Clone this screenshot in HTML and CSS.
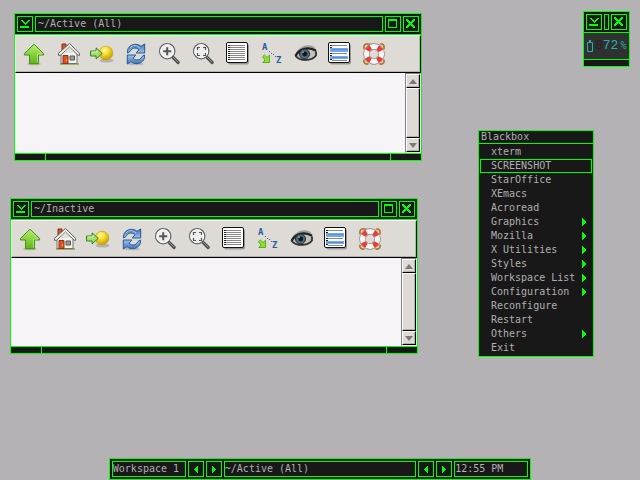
FILE: index.html
```html
<!DOCTYPE html>
<html lang="en">
<head>
<meta charset="utf-8">
<title>Blackbox</title>
<link rel="stylesheet" href="styles.css">
</head>
<body>
<svg class="defs" aria-hidden="true">
  <defs>
    <linearGradient id="g-green" x1="0" y1="0" x2="0" y2="1"><stop offset="0" stop-color="#b4ee68"/><stop offset="1" stop-color="#5fb61a"/></linearGradient>
    <linearGradient id="g-blue" x1="0" y1="0" x2="0" y2="1"><stop offset="0" stop-color="#3f74b4"/><stop offset="1" stop-color="#9cc2ea"/></linearGradient>
    <radialGradient id="g-ball" cx=".4" cy=".3" r=".7"><stop offset="0" stop-color="#fffab0"/><stop offset=".45" stop-color="#f6dc28"/><stop offset="1" stop-color="#c89a08"/></radialGradient>
    <symbol id="i-iconify" viewBox="0 0 14 14"><path d="M3 3h2v1h1v1h1v1h1V5h1V4h1V3h2v1h-1v1h-1v1H9v1H8v1H7V7H6V6H5V5H4V4H3zM2 9h9v2H2z" fill="#0f0"/></symbol>
    <symbol id="i-max" viewBox="0 0 14 14"><path d="M2 2h9v9H2zM3 4v6h7V4z" fill="#0f0" fill-rule="evenodd"/></symbol>
    <symbol id="i-close" viewBox="0 0 14 14"><path d="M2 2h2v1h1v1h1v1h1V4h1V3h1V2h2v2h-1v1H9v1H8v1h1v1h1v1h1v2H9v-1H8V9H7V8H6v1H5v1H4v1H2V9h1V8h1V7h1V6H4V5H3V4H2z" fill="#0f0"/></symbol>
    <symbol id="i-left" viewBox="0 0 14 14"><path d="M8 4h1v7H8v-1H7V9H6V8H5V7h1V6h1V5h1z" fill="#0f0"/></symbol>
    <symbol id="i-right" viewBox="0 0 14 14"><path d="M5 4h1v1h1v1h1v1h1v1H8v1H7v1H6v1H5z" fill="#0f0"/></symbol>
    <symbol id="i-sub" viewBox="0 0 4 8"><path d="M0 0h1v1h1v1h1v1h1v2H3v1H2v1H1v1H0z" fill="#0f0"/></symbol>

    <symbol id="t-up" viewBox="0 0 24 24"><ellipse cx="12" cy="22" rx="7" ry="1.3" fill="#8a8a80" opacity=".45"/><path d="M12 2.2 21.6 11.5V13H16.5V21.7H7.5V13H2.4V11.5z" fill="url(#g-green)" stroke="#459016"/><path d="M12 3.8 20 12H15.5V20.7" fill="none" stroke="#d0f59c" opacity=".6"/></symbol>
    <symbol id="t-home" viewBox="0 0 24 24"><path d="M4 22h19" stroke="#78a532" stroke-width="1.4"/><path d="M6 2h4v6L6 11z" fill="#d85428" stroke="#75351e"/><path d="M5 11v10.5h16V11L13.5 3z" fill="#f3f3f1" stroke="#72736f"/><path d="M13.5 1.5 2.5 11.3v2h2L13.5 5l8.7 8.3h1.3v-2z" fill="#ededeb" stroke="#5d605b"/><path d="M10 6v5M12 5v6M14 5v6M16 6v5" stroke="#cfcfcb"/><path d="M7 13.5h5v8H7z" fill="#d95224" stroke="#9e2d10"/><circle cx="10.6" cy="18" r=".6" fill="#fff"/><path d="M14 14h4.5v4H14z" fill="#9da09a" stroke="#555753"/></symbol>
    <symbol id="t-go" viewBox="0 0 24 24"><ellipse cx="16.5" cy="18.5" rx="7" ry="2" fill="#777" opacity=".4"/><circle cx="16" cy="11" r="6.8" fill="url(#g-ball)" stroke="#c0a010" stroke-width=".7"/><path d="M.5 9h5.6V5.9L12.2 11.4 6.1 17V14H.5z" fill="#a1dc6c" stroke="#38801b"/><path d="M1.5 10h5.6V8" fill="none" stroke="#dbf8bc"/></symbol>
    <symbol id="t-refresh" viewBox="0 0 24 24"><ellipse cx="12" cy="22" rx="8" ry="1.3" fill="#777" opacity=".35"/><path id="half" d="M3.5 8.3C5 2.2 12.5.6 17 4.3L20.7 2v9h-8.5L15 7.6C11.2 4.8 7.7 6 6 9.5L3.5 11z" fill="url(#g-blue)" stroke="#2b5a95"/><use href="#half" transform="rotate(180 12 12)"/><path d="M6 6c3-3.5 7-3.1 10 0" fill="none" stroke="#a9cbef"/></symbol>
    <symbol id="t-zoom" viewBox="0 0 24 24"><path d="M14.8 15.2 20.2 20.5" stroke="#4b4f50" stroke-width="3.2" stroke-linecap="round"/><path d="M14.8 14.8 20.2 20.2" stroke="#959996"/><circle cx="9.2" cy="9.2" r="7.6" fill="#edeeed" stroke="#626561" stroke-width="1.3"/><circle cx="9.2" cy="9.2" r="6.5" fill="none" stroke="#fff"/><path d="M5.2 9.2h8M9.2 5.2v8" stroke="#555" stroke-width="2"/></symbol>
    <symbol id="t-fit" viewBox="0 0 24 24"><path d="M14.8 15.2 20.2 20.5" stroke="#4b4f50" stroke-width="3.2" stroke-linecap="round"/><path d="M14.8 14.8 20.2 20.2" stroke="#959996"/><circle cx="9.2" cy="9.2" r="7.6" fill="#edeeed" stroke="#626561" stroke-width="1.3"/><circle cx="9.2" cy="9.2" r="6.5" fill="none" stroke="#fff"/><path d="M5.500 8V5.500H8M11 5.500h2.500V8M13.500 11v2.500H11M8 13.500H5.500V11" fill="none" stroke="#555" stroke-width="1.2"/></symbol>
    <symbol id="t-list" viewBox="0 0 24 24"><rect x="2" y="2" width="21" height="20.500" rx="2" fill="#555" opacity=".5"/><rect x=".5" y=".5" width="21" height="20" rx="1.500" fill="#fff" stroke="#111"/><path d="M2 3.500h2M2 5.500h2M2 7.500h2M2 9.500h2M2 11.500h2M2 13.500h2M2 15.500h2M2 17.500h2" stroke="#222"/><path d="M4 3.500h15M4 5.500h15M4 7.500h15M4 9.500h15M4 11.500h15M4 13.500h15M4 15.500h15M4 17.500h15" stroke="#888"/></symbol>
    <symbol id="t-mark" viewBox="0 0 24 24"><rect x="2" y="2" width="21" height="20.500" rx="2" fill="#555" opacity=".5"/><rect x=".5" y=".5" width="21" height="20" rx="1.500" fill="#fff" stroke="#111"/><path d="M2 3.500h2M2 5.500h2M2 7.500h2M2 9.500h2M2 11.500h2M2 13.500h2M2 15.500h2M2 17.500h2" stroke="#222"/><path d="M4 3.500h15M4 11.500h15M4 18.500h15" stroke="#888"/><path d="M2 6h18v4H2zM2 14h18v3H2z" fill="#72a8ee"/><path d="M4 7.500h15M4 15.500h15" stroke="#5b90d8"/></symbol>
    <symbol id="t-sort" viewBox="0 0 24 24"><text x="2" y="8" class="letter">A</text><text x="16" y="21" class="letter">Z</text><path d="M9 9h1v1H9zM11 11h1v1h-1zM13 12h1v1h-1zM15 14h1v1h-1z" fill="#3465a4"/><path d="M2.500 14.700 4.300 13 7 15.500 9.500 13.200V20.500H2.800L5 18z" fill="#8ae234" stroke="#4e9a06" stroke-width=".8"/></symbol>
    <symbol id="t-eye" viewBox="0 0 24 24"><path d="M2 11C6 3.500 15 1.500 20.500 5L23 10 21.500 15.500C16 20 9 20 5 17L1.500 14z" fill="#666" opacity=".5"/><path d="M3 13.500C7 7 14 5.500 21.500 9L21.500 13.500C18 17.500 9 18.500 5.500 15.800z" fill="#c4c1bd"/><path d="M1.500 14C5 7 14 3.800 22 8.800" fill="none" stroke="#222" stroke-width="2.200"/><path d="M1.500 14C6 19.500 18 19 22 13.500V9.500" fill="none" stroke="#333" stroke-width="1.800"/><circle cx="10.500" cy="12" r="5" fill="#4f6c7c" stroke="#202b30"/><circle cx="10.800" cy="12" r="2.400" fill="#10181b"/><circle cx="9" cy="10.200" r=".8" fill="#aebfc8"/></symbol>
    <symbol id="t-help" viewBox="0 0 24 24"><rect x="2" y="2" width="20" height="20" rx="3" fill="none" stroke="#b57a2c" stroke-width="1.400" stroke-dasharray="7 10.700" stroke-dashoffset="3.500" /><path d="M2 6.500Q1 1.500 6 1.800M18 1.800Q23 1.500 22 6.500M22 17.500Q23 22.500 18 22.200M6 22.200Q1 22.500 2 17.500" fill="none" stroke="#b57a2c" stroke-width="1.300"/><circle cx="12" cy="12" r="7.500" fill="none" stroke="#83837f" stroke-width="6.400"/><circle cx="12" cy="12" r="7.500" fill="none" stroke="#f5f5f3" stroke-width="5.200"/><circle cx="12" cy="12" r="7.500" fill="none" stroke="#ee3a34" stroke-width="5.200" stroke-dasharray="4.600 7.181" stroke-dashoffset="-3.590"/></symbol>
  </defs>
</svg>

<main class="desktop">
  <section class="window active" aria-label="~/Active (All)">
    <header class="bar">
      <button class="box" aria-label="Iconify"><svg><use href="#i-iconify"/></svg></button>
      <h2 class="box label">~/Active (All)</h2>
      <button class="box" aria-label="Maximize"><svg><use href="#i-max"/></svg></button>
      <button class="box" aria-label="Close"><svg><use href="#i-close"/></svg></button>
    </header>
    <nav class="tools">
      <button aria-label="Up"><svg><use href="#t-up"/></svg></button>
      <button aria-label="Home"><svg><use href="#t-home"/></svg></button>
      <button aria-label="Go to"><svg><use href="#t-go"/></svg></button>
      <button aria-label="Refresh"><svg><use href="#t-refresh"/></svg></button>
      <button aria-label="Zoom in"><svg><use href="#t-zoom"/></svg></button>
      <button aria-label="Zoom to fit"><svg><use href="#t-fit"/></svg></button>
      <button aria-label="List"><svg><use href="#t-list"/></svg></button>
      <button aria-label="Sort"><svg><use href="#t-sort"/></svg></button>
      <button aria-label="Show hidden"><svg><use href="#t-eye"/></svg></button>
      <button aria-label="Select"><svg><use href="#t-mark"/></svg></button>
      <button aria-label="Help"><svg><use href="#t-help"/></svg></button>
    </nav>
    <div class="pane">
      <div class="files"></div>
      <div class="scroll">
        <button class="step" aria-label="Scroll up"><svg viewBox="0 0 8 5"><path d="M4 0 8 5H0z" fill="#7b7973"/></svg></button>
        <div class="thumb"></div>
        <button class="step" aria-label="Scroll down"><svg viewBox="0 0 8 5"><path d="M0 0h8L4 5z" fill="#7b7973"/></svg></button>
      </div>
    </div>
    <footer class="handle"><span></span><span></span></footer>
  </section>

  <section class="window inactive" aria-label="~/Inactive">
    <header class="bar">
      <button class="box" aria-label="Iconify"><svg><use href="#i-iconify"/></svg></button>
      <h2 class="box label">~/Inactive</h2>
      <button class="box" aria-label="Maximize"><svg><use href="#i-max"/></svg></button>
      <button class="box" aria-label="Close"><svg><use href="#i-close"/></svg></button>
    </header>
    <nav class="tools">
      <button aria-label="Up"><svg><use href="#t-up"/></svg></button>
      <button aria-label="Home"><svg><use href="#t-home"/></svg></button>
      <button aria-label="Go to"><svg><use href="#t-go"/></svg></button>
      <button aria-label="Refresh"><svg><use href="#t-refresh"/></svg></button>
      <button aria-label="Zoom in"><svg><use href="#t-zoom"/></svg></button>
      <button aria-label="Zoom to fit"><svg><use href="#t-fit"/></svg></button>
      <button aria-label="List"><svg><use href="#t-list"/></svg></button>
      <button aria-label="Sort"><svg><use href="#t-sort"/></svg></button>
      <button aria-label="Show hidden"><svg><use href="#t-eye"/></svg></button>
      <button aria-label="Select"><svg><use href="#t-mark"/></svg></button>
      <button aria-label="Help"><svg><use href="#t-help"/></svg></button>
    </nav>
    <div class="pane">
      <div class="files"></div>
      <div class="scroll">
        <button class="step" aria-label="Scroll up"><svg viewBox="0 0 8 5"><path d="M4 0 8 5H0z" fill="#7b7973"/></svg></button>
        <div class="thumb"></div>
        <button class="step" aria-label="Scroll down"><svg viewBox="0 0 8 5"><path d="M0 0h8L4 5z" fill="#7b7973"/></svg></button>
      </div>
    </div>
    <footer class="handle"><span></span><span></span></footer>
  </section>

  <section class="window battery" aria-label="Battery">
    <header class="bar">
      <button class="box" aria-label="Iconify"><svg><use href="#i-iconify"/></svg></button>
      <div class="box label"></div>
      <button class="box" aria-label="Close"><svg><use href="#i-close"/></svg></button>
    </header>
    <div class="lcd">
      <svg class="cell" viewBox="0 0 6 12" aria-hidden="true"><path d="M2 0h2v2H2z" fill="#20b2ae"/><path d="M.5 2.500h5v9h-5z" fill="#303030" stroke="#20b2ae"/></svg>
      <span class="digits"><span class="ghost" aria-hidden="true">8</span>72</span><span class="percent">%</span>
    </div>
    <footer class="handle"></footer>
  </section>

  <nav class="menu" aria-label="Blackbox">
    <h2>Blackbox</h2>
    <ul>
      <li><button>xterm</button></li>
      <li><button class="selected">SCREENSHOT</button></li>
      <li><button>StarOffice</button></li>
      <li><button>XEmacs</button></li>
      <li><button>Acroread</button></li>
      <li><button>Graphics<svg><use href="#i-sub"/></svg></button></li>
      <li><button>Mozilla<svg><use href="#i-sub"/></svg></button></li>
      <li><button>X Utilities<svg><use href="#i-sub"/></svg></button></li>
      <li><button>Styles<svg><use href="#i-sub"/></svg></button></li>
      <li><button>Workspace List<svg><use href="#i-sub"/></svg></button></li>
      <li><button>Configuration<svg><use href="#i-sub"/></svg></button></li>
      <li><button>Reconfigure</button></li>
      <li><button>Restart</button></li>
      <li><button>Others<svg><use href="#i-sub"/></svg></button></li>
      <li><button>Exit</button></li>
    </ul>
  </nav>

  <footer class="taskbar">
    <div class="box workspace">Workspace 1</div>
    <button class="box" aria-label="Previous workspace"><svg><use href="#i-left"/></svg></button>
    <button class="box" aria-label="Next workspace"><svg><use href="#i-right"/></svg></button>
    <div class="box current">~/Active (All)</div>
    <button class="box" aria-label="Previous window"><svg><use href="#i-left"/></svg></button>
    <button class="box" aria-label="Next window"><svg><use href="#i-right"/></svg></button>
    <div class="box clock">12:55 PM</div>
  </footer>
</main>
</body>
</html>
```
FILE: styles.css
```css
:root {
  --line: #00ff00;
  --dark: #181818;
  --text: #b0b0b0;
  --face: #dedbd6;
}

* { box-sizing: border-box; }

body {
  margin: 0;
  background: #b4b2b4;
  color: var(--text);
  font: 10px/14px "DejaVu Sans Mono", monospace;
}

h2, ul { margin: 0; padding: 0; font: inherit; list-style: none; }
button { margin: 0; padding: 0; border: 0; background: none; color: inherit; font: inherit; }
svg { display: block; }
.defs { position: absolute; width: 0; height: 0; }

.desktop {
  position: relative;
  display: flex;
  justify-content: center;
  align-items: flex-end;
  min-height: 100vh;
}

.box {
  flex: none;
  width: 16px;
  height: 16px;
  border: 1px solid var(--line);
  background: var(--dark);
  white-space: nowrap;
  overflow: hidden;
}
.box svg { width: 14px; height: 14px; }

.window {
  position: absolute;
  width: 408px;
  border: 1px solid var(--line);
  background: var(--dark);
}
.active { left: 14px; top: 13px; }
.inactive { left: 10px; top: 198px; }
.battery { left: 583px; top: 11px; width: 47px; }

.bar {
  display: flex;
  gap: 2px;
  padding: 2px;
  border-bottom: 1px solid var(--line);
}
.label { flex: 1; padding-left: 2px; }

.tools {
  display: flex;
  align-items: center;
  height: 38px;
  padding-left: 1px;
  background: var(--face);
  border: 1px solid #000;
  border-top-color: #fff;
  border-left-color: #fff;
  box-shadow: inset -1px -1px #b5b2ad;
}
.tools button { display: flex; justify-content: center; width: 34px; }
.tools svg { width: 24px; height: 24px; }
.letter { font: bold 9px "DejaVu Sans Mono", monospace; fill: #2c5ca4; }

.pane { display: flex; height: 80px; background: #f7f4f7; }
.inactive .pane { height: 88px; }
.files { flex: 1; }
.scroll {
  display: flex;
  flex-direction: column;
  width: 16px;
  border: 1px solid #fff;
  border-top-color: #848284;
  border-left-color: #848284;
}
.step, .thumb {
  background: var(--face);
  border: 1px solid #000;
  border-top-color: #fff;
  border-left-color: #fff;
  box-shadow: inset -1px -1px #b5b2ad;
}
.step { display: flex; align-items: center; justify-content: center; height: 14px; }
.step svg { width: 8px; height: 5px; }
.thumb { flex: 1; }

.handle {
  display: flex;
  justify-content: space-between;
  height: 7px;
  border-top: 1px solid var(--line);
}
.handle span { width: 31px; border-right: 1px solid var(--line); }
.handle span:last-child { border-right: 0; border-left: 1px solid var(--line); }

.lcd {
  display: flex;
  align-items: center;
  gap: 2px;
  height: 26px;
  padding-left: 3px;
  background: #303030;
  color: #20b2ae;
}
.cell { width: 6px; height: 12px; }
.digits { font: 13px/14px "Liberation Mono", monospace; }
.ghost { color: #242424; }

.menu {
  position: absolute;
  left: 478px;
  top: 130px;
  width: 116px;
  border: 1px solid var(--line);
  background: var(--dark);
  line-height: 12px;
}
.menu h2 { height: 13px; padding-left: 2px; border-bottom: 1px solid var(--line); }
.menu ul { padding: 1px; }
.menu button {
  display: flex;
  align-items: center;
  justify-content: space-between;
  width: 100%;
  height: 14px;
  padding: 0 5px 0 10px;
  border: 1px solid transparent;
  text-align: left;
}
.menu .selected { border-color: var(--line); }
.menu svg { width: 4px; height: 8px; }

.taskbar {
  display: flex;
  gap: 2px;
  width: 66%;
  padding: 2px;
  border: 1px solid var(--line);
  background: var(--dark);
}
.workspace, .clock { width: 74px; }
.current { flex: 1; }
```
